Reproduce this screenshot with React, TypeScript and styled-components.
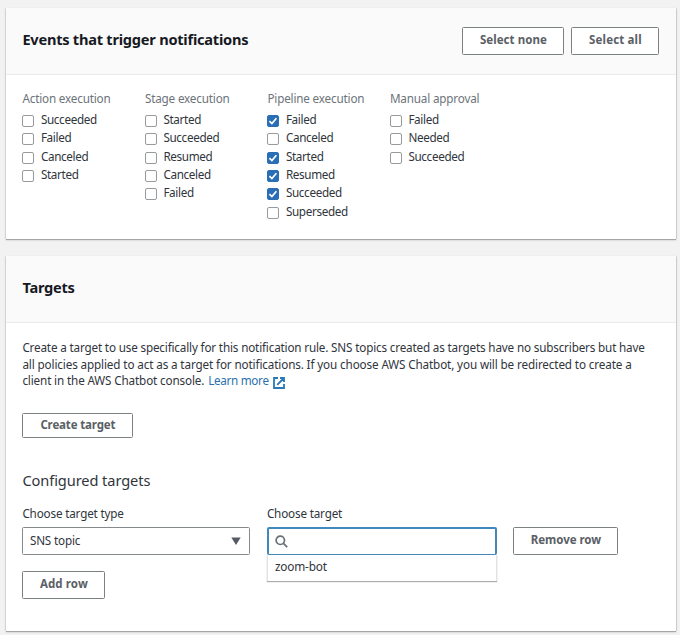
import React from 'react';
import styled, { createGlobalStyle } from 'styled-components';

const GlobalStyle = createGlobalStyle`
  *, *::before, *::after { box-sizing: border-box; }
  body {
    margin: 0;
    background: #f2f2f2;
    color: #30353c;
    font: 400 11.7px/17px 'Noto Sans', 'Open Sans', sans-serif;
    letter-spacing: -0.17px;
  }
`;

const Page = styled.main`
  display: flex;
  flex-direction: column;
  gap: 17px;
  height: 635px;
  padding: 8px 3px 3px 6px;
  overflow: hidden;
`;

const Panel = styled.section<{ $height: number }>`
  height: ${(p) => p.$height}px;
  width: 670px;
  background: #fff;
  box-shadow: 0 1px 0 #a3a6a6, 0 1px 2px rgba(0, 28, 36, 0.25), 1px 0 0 #dcdddd, -1px 0 0 #e4e5e5;
`;

const PanelHeader = styled.header`
  display: flex;
  align-items: center;
  justify-content: space-between;
  height: 67px;
  padding: 0 16.6px 0 16.4px;
  background: #fafafa;
  border-bottom: 1px solid #e9eaea;
`;

const Title = styled.h2`
  margin: 0 0 4px;
  color: #16191f;
  font-size: 14.6px;
  font-weight: 700;
  letter-spacing: -0.24px;
  line-height: 20px;
`;

const Actions = styled.div`
  display: flex;
  gap: 7px;
`;

const Button = styled.button<{ $width: number; $height?: number; $spacing?: number }>`
  width: ${(p) => p.$width}px;
  height: ${(p) => p.$height ?? 28}px;
  padding: 0 0 2.5px;
  border: 1px solid #7b8182;
  border-radius: 1.5px;
  background: #fff;
  color: #5a6066;
  font: 700 11.5px/17px 'Noto Sans', 'Open Sans', sans-serif;
  letter-spacing: ${(p) => p.$spacing ?? -0.15}px;
  white-space: nowrap;
`;

const EventGrid = styled.div`
  display: grid;
  grid-template-columns: repeat(4, 122.5px);
  padding: 15px 16.4px;
`;

const GroupTitle = styled.div`
  height: 20px;
  color: #6c7379;
`;

const Option = styled.label`
  display: flex;
  align-items: center;
  gap: 6.5px;
  height: 18.4px;
  letter-spacing: -0.34px;
`;

const OptionText = styled.span`
  padding-top: 0.4px;
`;

const Box = styled.span<{ $checked: boolean }>`
  display: flex;
  align-items: center;
  justify-content: center;
  width: 12px;
  height: 12px;
  margin-top: 3.4px;
  border: 1px solid ${(p) => (p.$checked ? '#2a6fb5' : '#979b9d')};
  border-radius: 2px;
  background: ${(p) => (p.$checked ? '#2a6fb5' : '#fff')};
`;

const TargetsBody = styled.div`
  display: flex;
  flex-direction: column;
  align-items: flex-start;
  padding: 16px 16.4px;
`;

const Description = styled.p`
  margin: 0 0 24px;
  line-height: 16.67px;
  white-space: nowrap;
`;

const Line = styled.span<{ $spacing: number }>`
  display: block;
  letter-spacing: ${(p) => p.$spacing}px;
`;

const Link = styled.a`
  margin-left: 1px;
  color: #2a6fae;
  letter-spacing: -0.3px;
`;

const LinkIcon = styled.svg`
  width: 12px;
  height: 12px;
  margin-left: 4px;
  vertical-align: -3.5px;
`;

const Subtitle = styled.h3`
  margin: 32px 0 15px;
  font-size: 14.6px;
  font-weight: 400;
  letter-spacing: -0.08px;
  line-height: 20px;
`;

const TargetRow = styled.div`
  display: flex;
  align-items: flex-end;
  gap: 16.5px;
  margin-bottom: 16px;
`;

const Field = styled.div<{ $width: number }>`
  position: relative;
  width: ${(p) => p.$width}px;
`;

const Label = styled.div`
  height: 22px;
`;

const Select = styled.div`
  display: flex;
  align-items: center;
  justify-content: space-between;
  height: 28px;
  padding: 0 8px 2px 6.5px;
  border: 1px solid #858a8b;
  border-radius: 1.5px;

  svg {
    margin-top: 2px;
  }
`;

const Search = styled.div`
  display: flex;
  align-items: center;
  height: 28px;
  padding-left: 6px;
  border: 2px solid #4188bc;
  border-bottom-width: 1px;
  border-radius: 2px;
`;

const Menu = styled.div`
  position: absolute;
  top: 100%;
  left: 0;
  right: 0;
  height: 26px;
  padding: 2.5px 7px;
  background: #fff;
  border: solid #e2e4e4;
  border-width: 0 1px;
  box-shadow: 0 1px 1px #a9adae;
  font-size: 11.8px;
`;

const groups: { title: string; options: [string, boolean][] }[] = [
  { title: 'Action execution', options: [['Succeeded', false], ['Failed', false], ['Canceled', false], ['Started', false]] },
  { title: 'Stage execution', options: [['Started', false], ['Succeeded', false], ['Resumed', false], ['Canceled', false], ['Failed', false]] },
  { title: 'Pipeline execution', options: [['Failed', true], ['Canceled', false], ['Started', true], ['Resumed', true], ['Succeeded', true], ['Superseded', false]] },
  { title: 'Manual approval', options: [['Failed', false], ['Needed', false], ['Succeeded', false]] },
];

export default function App() {
  return (
    <>
      <GlobalStyle />
      <Page>
        <Panel $height={231}>
          <PanelHeader>
            <Title>Events that trigger notifications</Title>
            <Actions>
              <Button $width={102} $spacing={0.05}>Select none</Button>
              <Button $width={88} $spacing={0.15}>Select all</Button>
            </Actions>
          </PanelHeader>
          <EventGrid>
            {groups.map((group) => (
              <div key={group.title}>
                <GroupTitle>{group.title}</GroupTitle>
                {group.options.map(([name, checked]) => (
                  <Option key={name}>
                    <Box $checked={checked}>
                      {checked && (
                        <svg width="10" height="10" viewBox="0 0 10 10" fill="none" stroke="#fff" strokeWidth="1.7">
                          <path d="M1.4 5.2 3.9 7.6 8.4 2.2" />
                        </svg>
                      )}
                    </Box>
                    <OptionText>{name}</OptionText>
                  </Option>
                ))}
              </div>
            ))}
          </EventGrid>
        </Panel>

        <Panel $height={375}>
          <PanelHeader>
            <Title>Targets</Title>
          </PanelHeader>
          <TargetsBody>
            <Description>
              <Line $spacing={-0.165}>
                Create a target to use specifically for this notification rule. SNS topics created as targets have no subscribers but have
              </Line>
              <Line $spacing={-0.125}>
                all policies applied to act as a target for notifications. If you choose AWS Chatbot, you will be redirected to create a
              </Line>
              <Line $spacing={-0.14}>
                client in the AWS Chatbot console. <Link>Learn more</Link>
                <LinkIcon viewBox="0 0 12 12" fill="none" stroke="#2a78b8" strokeWidth="1.8">
                  <path d="M5 1H1v10h10V7M7 1h4v4M11 1 4.2 7.8" />
                </LinkIcon>
              </Line>
            </Description>
            <Button $width={111} $height={25}>Create target</Button>
            <Subtitle>Configured targets</Subtitle>
            <TargetRow>
              <Field $width={228}>
                <Label>Choose target type</Label>
                <Select>
                  SNS topic
                  <svg width="10" height="8" viewBox="0 0 10 8" fill="#545b64">
                    <path d="M.3.5h9.4L5 7.9z" />
                  </svg>
                </Select>
              </Field>
              <Field $width={230}>
                <Label>Choose target</Label>
                <Search>
                  <svg width="13" height="13" viewBox="0 0 13 13" fill="none" stroke="#687078" strokeWidth="1.7">
                    <circle cx="5.3" cy="5.3" r="4.2" />
                    <path d="m8.4 8.4 3.8 3.8" />
                  </svg>
                </Search>
                <Menu>zoom-bot</Menu>
              </Field>
              <Button $width={105} $spacing={-0.05}>Remove row</Button>
            </TargetRow>
            <Button $width={83} $spacing={0.1}>Add row</Button>
          </TargetsBody>
        </Panel>
      </Page>
    </>
  );
}
